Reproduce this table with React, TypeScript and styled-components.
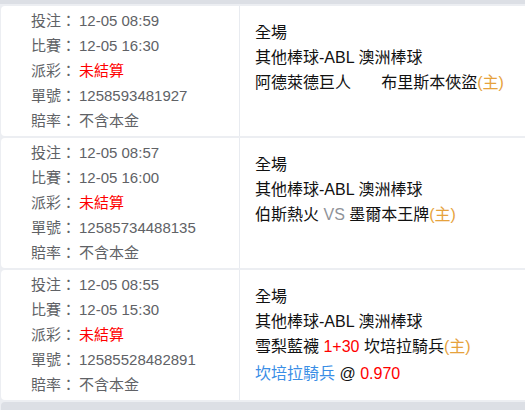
import React from 'react'
import styled, { createGlobalStyle } from 'styled-components'

const GlobalStyle = createGlobalStyle`
  html, body {
    margin: 0;
    padding: 0;
    background: #dcdfe5;
  }
  body {
    font-family: 'Liberation Sans', Arial, 'Noto Sans CJK TC', sans-serif;
  }
`

type Bet = {
  placed: string
  match: string
  order: string
  home: string
  away: string
  showVs: boolean
  handicap?: string
  pick?: { team: string; odds: string }
}

const bets: Bet[] = [
  {
    placed: '12-05 08:59',
    match: '12-05 16:30',
    order: '1258593481927',
    home: '阿德萊德巨人',
    away: '布里斯本俠盜',
    showVs: false,
  },
  {
    placed: '12-05 08:57',
    match: '12-05 16:00',
    order: '12585734488135',
    home: '伯斯熱火',
    away: '墨爾本王牌',
    showVs: true,
  },
  {
    placed: '12-05 08:55',
    match: '12-05 15:30',
    order: '12585528482891',
    home: '雪梨藍襪',
    away: '坎培拉騎兵',
    showVs: true,
    handicap: '1+30',
    pick: { team: '坎培拉騎兵', odds: '0.970' },
  },
]

const App = () => {
  return (
    <>
      <GlobalStyle />
      <List>
        <Stub $top />
        {bets.map((b) => (
          <Card key={b.order}>
            <Info>
              <InfoRow>
                <Label>投注：</Label>
                <Value>{b.placed}</Value>
              </InfoRow>
              <InfoRow>
                <Label>比賽：</Label>
                <Value>{b.match}</Value>
              </InfoRow>
              <InfoRow>
                <Label>派彩：</Label>
                <Value $red>未結算</Value>
              </InfoRow>
              <InfoRow>
                <Label>單號：</Label>
                <Value>{b.order}</Value>
              </InfoRow>
              <InfoRow>
                <Label>賠率：</Label>
                <Value>不含本金</Value>
              </InfoRow>
            </Info>
            <Detail>
              <Line>全場</Line>
              <Line>其他棒球-ABL 澳洲棒球</Line>
              <Line>
                {b.home}
                {b.handicap ? (
                  <Red> {b.handicap} </Red>
                ) : (
                  <Vs $invisible={!b.showVs}> VS </Vs>
                )}
                {b.away}
                <Home>(主)</Home>
              </Line>
              {b.pick && (
                <PickLine>
                  <Blue>{b.pick.team}</Blue> @ <Red>{b.pick.odds}</Red>
                </PickLine>
              )}
            </Detail>
          </Card>
        ))}
        <Stub />
      </List>
    </>
  )
}

export default App

const List = styled.div`
  display: flex;
  flex-direction: column;
  gap: 2px;
  background: #eceef2;
  margin-top: 4px;
  padding: 0 0 0 1px;
  height: 406px;
  overflow: hidden;
`

const Stub = styled.div<{ $top?: boolean }>`
  height: ${({ $top }) => ($top ? '0px' : '20px')};
  background: #dcdfe5;
  border-radius: 4px 0 0 0;
  flex-shrink: 0;
`

const Card = styled.div`
  display: flex;
  height: 130px;
  background: #fff;
  border-radius: 4px 0 0 4px;
  flex-shrink: 0;
`

const Info = styled.div`
  width: 239px;
  border-right: 1px solid #e8ebf0;
  padding: 2px 0 0 30px;
  box-sizing: border-box;
  flex-shrink: 0;
`

const InfoRow = styled.div`
  display: flex;
  height: 25px;
  line-height: 25px;
  font-size: 15px;
`

const Label = styled.span`
  width: 48px;
  color: #606266;
`

const Value = styled.span<{ $red?: boolean }>`
  color: ${({ $red }) => ($red ? '#ff0000' : '#606266')};
`

const Detail = styled.div`
  padding: 14px 0 0 15px;
  font-size: 16px;
  color: #111;
`

const Line = styled.div`
  height: 25px;
  line-height: 25px;
  white-space: nowrap;
`

const PickLine = styled(Line)`
  margin-top: 2px;
`

const Vs = styled.span<{ $invisible?: boolean }>`
  color: ${({ $invisible }) => ($invisible ? 'transparent' : '#909399')};
`

const Home = styled.span`
  color: #e6a23c;
`

const Red = styled.span`
  color: #ff0000;
`

const Blue = styled.span`
  color: #3a8ee6;
`
